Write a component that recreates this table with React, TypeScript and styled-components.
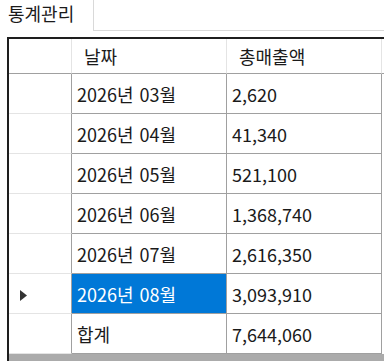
import styled, { createGlobalStyle } from 'styled-components';

type SalesRow = {
  month: string;
  amount: string;
  current?: boolean;
};

const rows: SalesRow[] = [
  { month: '2026년 03월', amount: '2,620' },
  { month: '2026년 04월', amount: '41,340' },
  { month: '2026년 05월', amount: '521,100' },
  { month: '2026년 06월', amount: '1,368,740' },
  { month: '2026년 07월', amount: '2,616,350' },
  { month: '2026년 08월', amount: '3,093,910', current: true },
  { month: '합계', amount: '7,644,060' },
];

const GlobalStyle = createGlobalStyle`
  html, body {
    margin: 0;
    background: #ffffff;
    overflow: hidden;
  }
  body {
    font-family: 'Noto Sans CJK KR', 'Noto Sans', sans-serif;
    color: #1a1a1a;
  }
`;

export default function App() {
  return (
    <>
      <GlobalStyle />
      <StyledWindow>
        <StyledTabStrip>
          <StyledTab>통계관리</StyledTab>
          <StyledTabFiller />
        </StyledTabStrip>

        <StyledTabPage>
          <StyledGrid>
            <StyledRow>
              <StyledRowHeader $header />
              <StyledHeaderCell>날짜</StyledHeaderCell>
              <StyledHeaderCell>총매출액</StyledHeaderCell>
              <StyledHeaderRest />
            </StyledRow>

            {rows.map((row) => (
              <StyledRow key={row.month}>
                <StyledRowHeader>
                  {row.current && (
                    <svg width="7" height="11" viewBox="0 0 7 11">
                      <path d="M0 0 L7 5.5 L0 11 Z" fill="#333333" />
                    </svg>
                  )}
                </StyledRowHeader>
                <StyledCell $selected={row.current}>{row.month}</StyledCell>
                <StyledCell>{row.amount}</StyledCell>
                <StyledRest />
              </StyledRow>
            ))}

            <StyledEmptyArea />
          </StyledGrid>
        </StyledTabPage>
      </StyledWindow>
    </>
  );
}

const StyledWindow = styled.div`
  width: 384px;
  height: 361px;
  overflow: hidden;
`;

const StyledTabStrip = styled.div`
  display: flex;
  height: 31px;
`;

const StyledTab = styled.div`
  width: 93px;
  padding-left: 8px;
  box-sizing: border-box;
  font-size: 18px;
  line-height: 26px;
  background: #ffffff;
`;

const StyledTabFiller = styled.div`
  flex: 1;
  border-left: 1px solid #d9d9d9;
  border-bottom: 1px solid #d9d9d9;
`;

const StyledTabPage = styled.div`
  padding: 6px 0 0 7px;
`;

const StyledGrid = styled.div`
  width: 420px;
  border-top: 2px solid #1e1e1e;
  border-left: 2px solid #1e1e1e;
  font-size: 18px;
`;

const StyledRow = styled.div`
  display: flex;
`;

const StyledRowHeader = styled.div<{ $header?: boolean }>`
  width: 51px;
  height: ${({ $header }) => ($header ? '34px' : '36px')};
  display: flex;
  align-items: center;
  padding-left: 11px;
  padding-top: ${({ $header }) => ($header ? '0' : '3px')};
  background: #ffffff;
  border-right: 1px solid ${({ $header }) => ($header ? '#e4e4e4' : '#a0a0a0')};
  border-bottom: 1px solid ${({ $header }) => ($header ? '#a0a0a0' : '#e4e4e4')};
`;

const StyledHeaderCell = styled.div`
  width: 142px;
  height: 34px;
  padding-left: 12px;
  display: flex;
  align-items: center;
  border-right: 1px solid #e4e4e4;
  border-bottom: 1px solid #a0a0a0;
`;

const StyledHeaderRest = styled.div`
  flex: 1;
  height: 34px;
  border-bottom: 1px solid #a0a0a0;
`;

const StyledCell = styled.div<{ $selected?: boolean }>`
  width: 149px;
  height: 39px;
  padding-left: 5px;
  display: flex;
  align-items: center;
  word-spacing: 2px;
  white-space: pre;
  background: ${({ $selected }) => ($selected ? '#0078d7' : '#ffffff')};
  color: ${({ $selected }) => ($selected ? '#ffffff' : '#1a1a1a')};
  border-right: 1px solid #a0a0a0;
  border-bottom: 1px solid #a0a0a0;
`;

const StyledRest = styled.div`
  flex: 1;
  height: 39px;
`;

const StyledEmptyArea = styled.div`
  height: 40px;
  background: #ababab;
`;
